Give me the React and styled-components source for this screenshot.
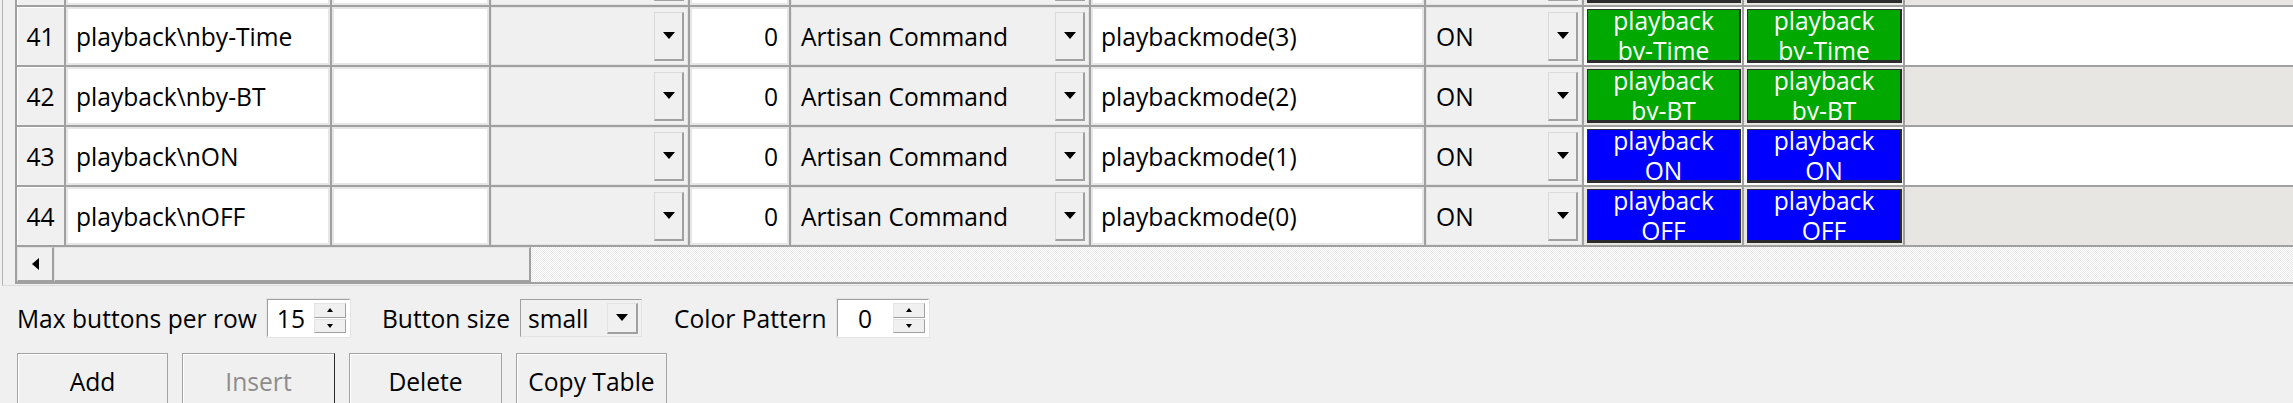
import React from 'react';
import styled, { createGlobalStyle } from 'styled-components';

const GlobalStyle = createGlobalStyle`
    body {
        margin: 0;
        background: #f0f0f0;
        font-family: "Segoe UI", "Open Sans", "Noto Sans", sans-serif;
        font-size: 24.6px;
        color: #000;
        overflow: hidden;
    }
`;

const COLS = '49px 266px 159px 199px 101px 300px 335px 158px 160px 161px 1fr';

// row 40 is scrolled almost out of view, only its bottom edge shows
const rows = [
    { n: 40, stub: true, color: '#b35c00' },
    { n: 41, label: 'playback\\nby-Time', mode: 'playbackmode(3)', color: '#00a800', text: ['playback', 'by-Time'] },
    { n: 42, label: 'playback\\nby-BT', mode: 'playbackmode(2)', color: '#00a800', text: ['playback', 'by-BT'] },
    { n: 43, label: 'playback\\nON', mode: 'playbackmode(1)', color: '#0000ff', text: ['playback', 'ON'] },
    { n: 44, label: 'playback\\nOFF', mode: 'playbackmode(0)', color: '#0000ff', text: ['playback', 'OFF'] },
];

const DownArrow = () => (
    <svg width="12" height="7" viewBox="0 0 12 7"><path d="M0 0h12L6 7z" fill="#000" /></svg>
);

const SmallArrow = ({ up }) => (
    <svg width="6" height="4" viewBox="0 0 6 4">
        <path d={up ? 'M3 0L6 4H0z' : 'M0 0h6L3 4z'} fill="#000" />
    </svg>
);

const App = () => {
    return (
        <Page>
            <GlobalStyle />
            <TablePanel>
                <TableFrame>
                    <Viewport>
                        <Rows>
                            {rows.map((r) => (
                                <Row key={r.n} $alt={r.n % 2 === 0}>
                                    <HeaderCell>{!r.stub && r.n}</HeaderCell>
                                    <EditCell>{r.label}</EditCell>
                                    <EditCell />
                                    <ComboCell>
                                        <span />
                                        <DropButton><DownArrow /></DropButton>
                                    </ComboCell>
                                    <EditCell $align="flex-end">{!r.stub && '0'}</EditCell>
                                    <ComboCell>
                                        <span>{!r.stub && 'Artisan Command'}</span>
                                        <DropButton><DownArrow /></DropButton>
                                    </ComboCell>
                                    <EditCell>{r.mode}</EditCell>
                                    <ComboCell>
                                        <span>{!r.stub && 'ON'}</span>
                                        <DropButton><DownArrow /></DropButton>
                                    </ComboCell>
                                    {[0, 1].map((i) => (
                                        <ButtonCell key={i}>
                                            <PlayButton $color={r.color}>
                                                {(r.text || []).map((t) => <ButtonLine key={t}>{t}</ButtonLine>)}
                                            </PlayButton>
                                        </ButtonCell>
                                    ))}
                                    <FillCell />
                                </Row>
                            ))}
                        </Rows>
                    </Viewport>
                    <HScroll>
                        <ScrollArrow>
                            <svg width="7" height="12" viewBox="0 0 7 12"><path d="M7 0v12L0 6z" fill="#000" /></svg>
                        </ScrollArrow>
                        <ScrollThumb />
                    </HScroll>
                </TableFrame>
            </TablePanel>

            <Controls>
                <Label>Max buttons per row</Label>
                <SpinBox $width={83}>
                    <SpinValue>15</SpinValue>
                    <SpinButtons>
                        <SpinHalf><SmallArrow up /></SpinHalf>
                        <SpinHalf><SmallArrow /></SpinHalf>
                    </SpinButtons>
                </SpinBox>
                <Label $gap>Button size</Label>
                <SizeCombo>
                    <span>small</span>
                    <SizeDrop><DownArrow /></SizeDrop>
                </SizeCombo>
                <Label $gap>Color Pattern</Label>
                <SpinBox $width={92}>
                    <SpinValue>0</SpinValue>
                    <SpinButtons>
                        <SpinHalf><SmallArrow up /></SpinHalf>
                        <SpinHalf><SmallArrow /></SpinHalf>
                    </SpinButtons>
                </SpinBox>
            </Controls>

            <ButtonRow>
                <PushButton $width={151}>Add</PushButton>
                <PushButton $width={153} $disabled>Insert</PushButton>
                <PushButton $width={153}>Delete</PushButton>
                <PushButton $width={151}>Copy Table</PushButton>
            </ButtonRow>
        </Page>
    );
}

const Page = styled.div`
    width: 2293px;
    height: 403px;
    padding-left: 2px;
    box-sizing: border-box;
`;

const TablePanel = styled.div`
    border-left: 1px solid #b4b4b4;
    border-bottom: 1px solid #dcdcdc;
    padding-left: 12px;
    padding-bottom: 1px;
`;

const TableFrame = styled.div`
    border-left: 2px solid #a0a0a0;
    border-bottom: 2px solid #a0a0a0;
`;

const Viewport = styled.div`
    height: 247px;
    overflow: hidden;
`;

const Rows = styled.div`
    margin-top: -53px;
`;

const Row = styled.div`
    display: grid;
    grid-template-columns: ${COLS};
    height: 60px;
    background: ${p => (p.$alt ? '#e7e6e3' : '#ffffff')};
`;

const Cell = styled.div`
    box-sizing: border-box;
    border-right: 2px solid #a0a0a0;
    border-bottom: 2px solid #a0a0a0;
    display: flex;
    align-items: center;
    min-width: 0;
    white-space: nowrap;
    overflow: hidden;
`;

const HeaderCell = styled(Cell)`
    background: #f0f0f0;
    justify-content: center;
    box-shadow: inset 1px 1px 0 #ffffff;
`;

const EditCell = styled(Cell)`
    background: #ffffff;
    box-shadow: inset 0 0 0 2px #e6e6e6;
    padding: 0 11px 0 10px;
    justify-content: ${p => p.$align || 'flex-start'};
`;

const ComboCell = styled(Cell)`
    background: #f0f0f0;
    justify-content: space-between;
    padding: 0 4px 0 10px;
    box-shadow: inset 0 0 0 1px #e3e3e3;
`;

const DropButton = styled.div`
    width: 30px;
    height: 49px;
    box-sizing: border-box;
    display: flex;
    align-items: center;
    justify-content: center;
    background: #f0f0f0;
    border-style: solid;
    border-width: 1px 2px 2px 1px;
    border-color: #dadada #a0a0a0 #a0a0a0 #dadada;
`;

const ButtonCell = styled(Cell)`
    padding: 2px 1px 0 3px;
    align-items: stretch;
`;

const PlayButton = styled.div`
    flex: 1;
    height: 54px;
    box-sizing: border-box;
    background: ${p => p.$color};
    color: #ffffff;
    border: 1px solid #2c2c2c;
    border-width: 1px 2px 3px 1px;
    text-align: center;
    line-height: 30px;
    overflow: hidden;
`;

const ButtonLine = styled.div`
    &:first-child {
        margin-top: -4px;
    }
`;

const FillCell = styled.div`
    border-bottom: 2px solid #a0a0a0;
`;

const HScroll = styled.div`
    display: flex;
    height: 35px;
    background: repeating-conic-gradient(#ffffff 0 25%, #e8e8e8 0 50%) 0 0 / 2px 2px;
`;

const Bevel = styled.div`
    box-sizing: border-box;
    height: 35px;
    background: #f0f0f0;
    border-style: solid;
    border-width: 1px 2px 2px 1px;
    border-color: #e3e3e3 #a0a0a0 #a0a0a0 #e3e3e3;
`;

const ScrollArrow = styled(Bevel)`
    width: 37px;
    display: flex;
    align-items: center;
    justify-content: center;
`;

const ScrollThumb = styled(Bevel)`
    width: 477px;
`;

const Controls = styled.div`
    display: flex;
    align-items: center;
    height: 38px;
    margin-top: 13px;
    padding-left: 15px;
`;

const Label = styled.span`
    margin-left: ${p => (p.$gap ? '32px' : '0')};
    margin-right: 10px;
`;

const SpinBox = styled.div`
    width: ${p => p.$width}px;
    height: 38px;
    box-sizing: border-box;
    display: flex;
    background: #ffffff;
    border: 1px solid;
    border-color: #a0a0a0 #ffffff #ffffff #a0a0a0;
    box-shadow: 0 0 0 1px #e3e3e3;
`;

const SpinValue = styled.div`
    flex: 1;
    display: flex;
    align-items: center;
    justify-content: center;
`;

const SpinButtons = styled.div`
    width: 32px;
    display: flex;
    flex-direction: column;
    padding: 3px 3px 3px 0;
    gap: 1px;
`;

const SpinHalf = styled.div`
    flex: 1;
    display: flex;
    align-items: center;
    justify-content: center;
    background: #f0f0f0;
    border-style: solid;
    border-width: 1px;
    border-color: #e3e3e3 #a0a0a0 #a0a0a0 #e3e3e3;
`;

const SizeCombo = styled.div`
    width: 122px;
    height: 38px;
    box-sizing: border-box;
    display: flex;
    align-items: center;
    justify-content: space-between;
    padding: 0 3px 0 7px;
    background: #f0f0f0;
    border: 1px solid;
    border-color: #a0a0a0 #e3e3e3 #e3e3e3 #a0a0a0;
`;

const SizeDrop = styled.div`
    width: 31px;
    height: 31px;
    box-sizing: border-box;
    display: flex;
    align-items: center;
    justify-content: center;
    border-style: solid;
    border-width: 1px 2px 2px 1px;
    border-color: #e3e3e3 #a0a0a0 #a0a0a0 #e3e3e3;
`;

const ButtonRow = styled.div`
    display: flex;
    gap: 14px;
    margin-top: 16px;
    padding-left: 15px;
`;

const PushButton = styled.div`
    width: ${p => p.$width}px;
    height: 56px;
    box-sizing: border-box;
    display: flex;
    align-items: center;
    justify-content: center;
    background: #f0f0f0;
    color: ${p => (p.$disabled ? '#8c8c8c' : '#000')};
    border: 1px solid #a3a3a3;
    border-right-color: ${p => (p.$disabled ? '#2b2b2b' : '#a3a3a3')};
    box-shadow: inset 1px 1px 0 #ffffff;
`;

export default App;
